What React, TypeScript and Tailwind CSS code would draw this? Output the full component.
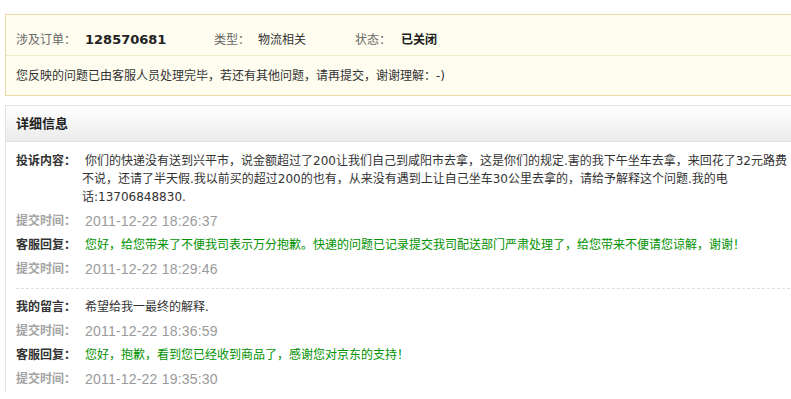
const entries = [
  { kind: 'text', label: '投诉内容：', text: '你们的快递没有送到兴平市，说金额超过了200让我们自己到咸阳市去拿，这是你们的规定.害的我下午坐车去拿，来回花了32元路费不说，还请了半天假.我以前买的超过200的也有，从来没有遇到上让自己坐车30公里去拿的，请给予解释这个问题.我的电话:13706848830.' },
  { kind: 'time', label: '提交时间：', text: '2011-12-22 18:26:37' },
  { kind: 'reply', label: '客服回复：', text: '您好，给您带来了不便我司表示万分抱歉。快递的问题已记录提交我司配送部门严肃处理了，给您带来不便请您谅解，谢谢！' },
  { kind: 'time', label: '提交时间：', text: '2011-12-22 18:29:46' },
  { kind: 'divider', label: '', text: '' },
  { kind: 'text', label: '我的留言：', text: '希望给我一最终的解释.' },
  { kind: 'time', label: '提交时间：', text: '2011-12-22 18:36:59' },
  { kind: 'reply', label: '客服回复：', text: '您好，抱歉，看到您已经收到商品了，感谢您对京东的支持！' },
  { kind: 'time', label: '提交时间：', text: '2011-12-22 19:35:30' },
]

function Row({ kind, label, text }: { kind: string; label: string; text: string }) {
  if (kind === 'divider') {
    return <div className="mt-[7px] mb-[6px] border-t border-dashed border-[#dedede]" />
  }
  const isTime = kind === 'time'
  return (
    <div className="flex py-[3px] leading-[18px]">
      <div className={isTime ? 'w-[66px] shrink-0 font-bold text-[#a3a3a3]' : 'w-[66px] shrink-0 font-bold text-[#333]'}>
        {label}
      </div>
      {isTime ? (
        <div className="w-[713px] pl-[3px] font-['Liberation_Sans',sans-serif] text-[14px] tracking-[0.2px] text-[#9a9a9a]">{text}</div>
      ) : (
        <div className={kind === 'reply' ? 'w-[713px] indent-[3px] text-[#009100]' : 'w-[713px] indent-[3px] text-[#333]'}>
          {text}
        </div>
      )}
    </div>
  )
}

export default function App() {
  return (
    <div className="w-[791px] h-[399px] overflow-hidden bg-white pt-[14px] pl-[5px] font-['DejaVu_Sans','Noto_Sans_CJK_SC',sans-serif] text-[12px] text-[#333]">
      {/* order summary */}
      <div className="w-[830px] border border-[#ecd9a6] bg-[#fffdef]">
        <div className="flex h-[41px] items-center border-b border-[#f0e8cc] pt-[10px] pl-[10px]">
          <div className="flex w-[198px] items-center">
            <span className="w-[69px] text-[#666]">涉及订单：</span>
            <span className="text-[13px] font-bold text-[#222]">128570681</span>
          </div>
          <div className="flex w-[141px] items-center">
            <span className="w-[44px] text-[#666]">类型：</span>
            <span className="text-[#333]">物流相关</span>
          </div>
          <div className="flex items-center">
            <span className="w-[46px] text-[#666]">状态：</span>
            <span className="font-bold text-[#222]">已关闭</span>
          </div>
        </div>
        <div className="flex h-[39px] items-center pt-[1px] pl-[10px] text-[#333]">
          您反映的问题已由客服人员处理完毕，若还有其他问题，请再提交，谢谢理解：-)
        </div>
      </div>

      {/* details */}
      <div className="mt-[9px] w-[830px] border-t border-l border-[#e3e3e3]">
        <div className="flex h-[36px] items-center border-b border-[#e3e3e3] bg-gradient-to-b from-white to-[#ebebeb] pl-[10px] text-[13px] font-bold text-[#222]">
          详细信息
        </div>
        <div className="pt-[7px] pl-[10px]">
          {entries.map((e, i) => (
            <Row key={i} kind={e.kind} label={e.label} text={e.text} />
          ))}
        </div>
      </div>
    </div>
  )
}
